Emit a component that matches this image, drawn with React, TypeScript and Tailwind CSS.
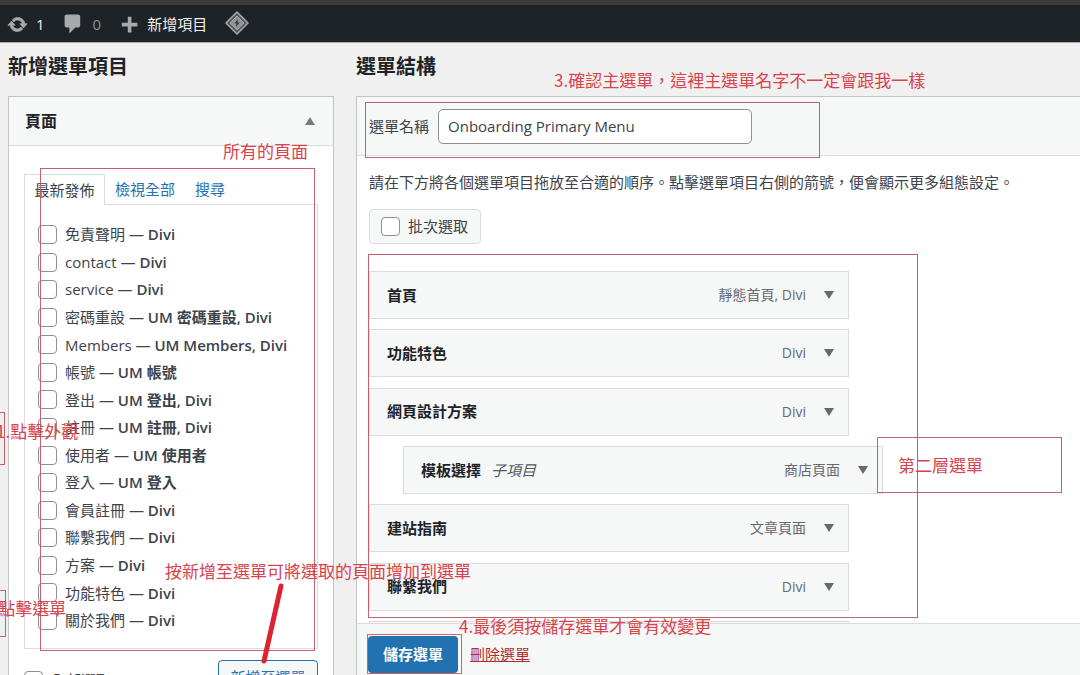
import React from 'react';

interface PageItem {
  title: string;
  state: string;
}

interface MenuItem {
  title: string;
  type: string;
  isChild?: boolean;
}

const pages: PageItem[] = [
  { title: '免責聲明', state: 'Divi' },
  { title: 'contact', state: 'Divi' },
  { title: 'service', state: 'Divi' },
  { title: '密碼重設', state: 'UM 密碼重設, Divi' },
  { title: 'Members', state: 'UM Members, Divi' },
  { title: '帳號', state: 'UM 帳號' },
  { title: '登出', state: 'UM 登出, Divi' },
  { title: '註冊', state: 'UM 註冊, Divi' },
  { title: '使用者', state: 'UM 使用者' },
  { title: '登入', state: 'UM 登入' },
  { title: '會員註冊', state: 'Divi' },
  { title: '聯繫我們', state: 'Divi' },
  { title: '方案', state: 'Divi' },
  { title: '功能特色', state: 'Divi' },
  { title: '關於我們', state: 'Divi' },
];

const menuItems: MenuItem[] = [
  { title: '首頁', type: '靜態首頁, Divi' },
  { title: '功能特色', type: 'Divi' },
  { title: '網頁設計方案', type: 'Divi' },
  { title: '模板選擇', type: '商店頁面', isChild: true },
  { title: '建站指南', type: '文章頁面' },
  { title: '聯繫我們', type: 'Divi' },
];

const checkboxClass =
  'size-[19px] shrink-0 appearance-none rounded-[4px] border border-[#8c8f94] bg-white checked:bg-[#2271b1]';

const AdminBar: React.FC = () => (
  <header className="flex h-[43px] shrink-0 items-center border-t-[5px] border-b border-t-[#3d3c39] border-b-[#a9abad] bg-[#1d2327] pt-px pl-[7px] text-[15px] text-[#f0f0f1]">
    <a href="#updates" className="flex items-center gap-2">
      <svg viewBox="0 0 20 20" className="size-[21px] fill-[#a7aaad] stroke-[#a7aaad]" strokeWidth="0.6">
        <path d="M10.2 3.28c3.53 0 6.43 2.61 6.92 6h2.08l-3.5 4-3.5-4h2.32c-.45-1.97-2.21-3.45-4.32-3.45-1.45 0-2.73.71-3.54 1.78L4.95 5.66C6.23 4.2 8.11 3.28 10.2 3.28zm-.4 13.44c-3.52 0-6.43-2.61-6.92-6H.8l3.5-4c1.17 1.33 2.33 2.67 3.5 4H5.48c.45 1.97 2.21 3.45 4.32 3.45 1.45 0 2.73-.71 3.54-1.78l1.71 1.95c-1.28 1.46-3.15 2.38-5.25 2.38z" />
      </svg>
      1
    </a>
    <a href="#comments" className="ml-4 flex items-center gap-2 text-[#8f9297]">
      <svg viewBox="0 0 20 20" className="size-6 fill-[#a7aaad]">
        <path d="M5 2h9q.82 0 1.41.59T16 4v7q0 .82-.59 1.41T14 13h-2l-5 5v-5H5q-.82 0-1.41-.59T3 11V4q0-.82.59-1.41T5 2z" />
      </svg>
      0
    </a>
    <a href="#new" className="ml-4 flex items-center gap-1.5">
      <svg viewBox="0 0 20 20" className="size-6 fill-[#a7aaad]">
        <path d="M17 9v3h-5v5H9v-5H4V9h5V4h3v5h5z" />
      </svg>
      新增項目
    </a>
    <a href="#plugin" aria-label="Plugin" className="ml-[18px] pb-0.5">
      <svg viewBox="0 0 24 24" className="size-6" fill="none">
        <path d="M12 1 23 12 12 23 1 12z" fill="#55595e" stroke="#a7aaad" strokeWidth="1.5" />
        <path d="M12 5 19 12 12 19 5 12z" fill="#8f9397" stroke="#b4b7ba" strokeWidth="0.8" />
        <path d="M13 8 9.5 12.5h2L11 16l3.5-4.5h-2z" fill="#33383d" />
      </svg>
    </a>
  </header>
);

const PagesPanel: React.FC = () => (
  <section className="w-[326px] shrink-0">
    <h2 className="text-xl leading-7 font-bold">新增選單項目</h2>
    <div className="mt-[15px] border border-[#c3c4c7] bg-white">
      <div className="flex h-[49px] items-center justify-between border-b border-[#dcdcde] bg-[#f6f7f7] px-4">
        <h3 className="text-base font-bold">頁面</h3>
        <button aria-label="收合" className="p-0.5">
          <svg viewBox="0 0 10 8" className="h-2 w-2.5 fill-[#787c82]">
            <path d="M5 0 10 8H0z" />
          </svg>
        </button>
      </div>

      <div className="px-[15px] pt-7">
        <div className="flex h-[30px] text-[15px] text-[#2271b1]">
          <button className="relative -mb-px w-[81px] border border-b-0 border-[#dcdcde] bg-white text-[#3c434a]">
            最新發佈
          </button>
          <button className="ml-2.5">檢視全部</button>
          <button className="ml-5">搜尋</button>
        </div>
        <div className="h-[445px] border border-[#dcdcde] pt-4 pl-[13px]">
          <ul className="flex h-[413px] flex-col justify-between">
            {pages.map((page) => (
              <li key={page.title}>
                <label className="flex h-[27px] items-center gap-2 text-[15px] text-[#3c434a]">
                  <input type="checkbox" className={checkboxClass} />
                  <span>
                    {page.title} — <span className="font-semibold">{page.state}</span>
                  </span>
                </label>
              </li>
            ))}
          </ul>
        </div>

        <div className="flex justify-between pt-[11px] pb-3">
          <label className="flex h-10 items-center gap-2 text-[15px] text-[#3c434a]">
            <input type="checkbox" className={checkboxClass} />
            全部選取
          </label>
          <button className="h-[34px] w-[100px] rounded border border-[#2271b1] bg-[#f6f7f7] text-[15px] text-[#2271b1]">
            新增至選單
          </button>
        </div>
      </div>
    </div>
  </section>
);

const MenuStructure: React.FC = () => (
  <section className="flex min-w-0 flex-1 flex-col">
    <h2 className="text-xl leading-7 font-bold">選單結構</h2>
    <div className="mt-[15px] flex min-h-0 flex-1 flex-col border-t border-l border-[#c3c4c7] bg-white">
      <div className="flex h-[59px] shrink-0 items-center gap-[9px] border-b border-[#dcdcde] bg-[#f6f7f7] pl-3 text-[15px]">
        <label htmlFor="menu-name" className="text-[#3c434a]">
          選單名稱
        </label>
        <input
          id="menu-name"
          type="text"
          defaultValue="Onboarding Primary Menu"
          className="h-[35px] w-[314px] rounded-[5px] border border-[#8c8f94] bg-white px-[9px] text-[#3c434a]"
        />
      </div>

      <div className="min-h-0 flex-1 overflow-hidden pl-3">
        <p className="mt-3.5 text-[15px] leading-6 whitespace-nowrap text-[#3c434a]">
          {'請在下方將各個選單項目拖放至合適的順序。點擊選單項目右側的箭號\uff0c便會顯示更多組態設定。'}
        </p>
        <label className="mt-[15px] flex h-[35px] w-28 items-center gap-2 rounded border border-[#dcdcde] bg-[#f6f7f7] pl-[11px] text-[15px] text-[#3c434a]">
          <input type="checkbox" className={checkboxClass} />
          批次選取
        </label>

        <ul className="mt-[27px] flex h-[398px] flex-col justify-between">
          {menuItems.map((item) => (
            <li
              key={item.title}
              className={`flex h-12 w-[480px] shrink-0 items-center border border-[#dcdcde] bg-[#f6f7f7] pr-3.5 pl-[17px] text-[15px] ${
                item.isChild ? 'ml-[34px]' : ''
              }`}
            >
              <span className="font-bold">{item.title}</span>
              {item.isChild && <em className="ml-2.5 text-[#50575e]">子項目</em>}
              <span className="ml-auto text-sm text-[#646970]">{item.type}</span>
              <button aria-label={`編輯 ${item.title}`} className="ml-[18px]">
                <svg viewBox="0 0 10 8" className="h-2 w-2.5 fill-[#646970]">
                  <path d="M0 0h10L5 8z" />
                </svg>
              </button>
            </li>
          ))}
          {/* next item, scrolled under the save bar */}
          <li className="h-12 w-[480px] shrink-0 border border-[#dcdcde] bg-[#f6f7f7]" />
        </ul>
      </div>

      <div className="flex h-[52px] shrink-0 items-center gap-3 border-t border-[#dcdcde] bg-[#f6f7f7] pt-2.5 pl-[11px] text-[15px]">
        <button className="h-[37px] w-[90px] rounded bg-[#2271b1] font-semibold text-white">
          儲存選單
        </button>
        <a href="#delete" className="text-[#b32d2e] underline">
          刪除選單
        </a>
      </div>
    </div>
  </section>
);

// Red tutorial marks drawn on top of the admin screen
const Annotations: React.FC = () => (
  <div className="pointer-events-none absolute inset-0 z-20 overflow-hidden font-['Noto_Sans_CJK_TC',sans-serif] text-[17px] leading-6 whitespace-nowrap text-[#d8434c] *:absolute">
    <div className="top-[102px] left-[365px] h-14 w-[455px] border border-[#c4626c]" />
    <div className="top-[168px] left-10 h-[483px] w-[275px] border border-[#c4626c]" />
    <div className="top-[254px] left-[368px] h-[364px] w-[550px] border border-[#c4626c]" />
    <div className="top-[437px] left-[877px] h-14 w-[185px] border border-[#c4626c]" />
    <div className="top-[634px] left-[367px] h-10 w-[95px] border border-[#d8606a]" />
    <div className="top-[412px] -left-4 h-[53px] w-[21px] border border-[#c4626c]" />
    <div className="top-[590px] -left-4 h-[47px] w-[22px] border border-[#c4626c]" />

    <span className="top-[139px] left-[223px]">所有的頁面</span>
    <span className="top-[68px] left-[554px]">
      {'3.確認主選單\uff0c這裡主選單名字不一定會跟我一樣'}
    </span>
    <span className="top-[453px] left-[898px]">第二層選單</span>
    <span className="top-[559px] left-[165px]">按新增至選單可將選取的頁面增加到選單</span>
    <span className="top-[614px] left-[459px]">4.最後須按儲存選單才會有效變更</span>
    <span className="top-[419px] -left-1">1.點擊外觀</span>
    <span className="top-[596px] -left-4">2.點擊選單</span>

    <svg viewBox="0 0 30 90" className="top-[578px] left-[258px] h-[90px] w-[30px]">
      <path d="M23 8 6 83" stroke="#dc2430" strokeWidth="5" strokeLinecap="round" />
    </svg>
  </div>
);

export default function App() {
  return (
    <div className="relative flex h-screen flex-col overflow-hidden bg-[#f0f0f1] font-['Open_Sans','Noto_Sans_CJK_TC',sans-serif] text-[#1d2327]">
      <AdminBar />
      <main className="flex min-h-0 flex-1 gap-[22px] pt-2.5 pl-2">
        <PagesPanel />
        <MenuStructure />
      </main>
      <Annotations />
    </div>
  );
}
